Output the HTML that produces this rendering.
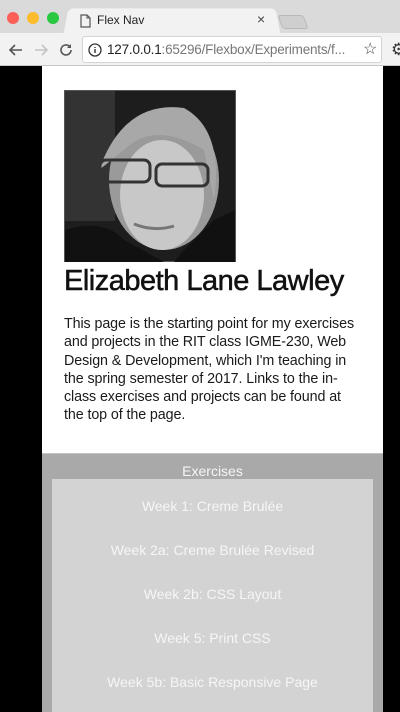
<!DOCTYPE html>
<html><head><meta charset="utf-8"><style>
*{margin:0;padding:0;box-sizing:border-box}
body{width:400px;height:712px;overflow:hidden;background:#000;font-family:"Liberation Sans",sans-serif;position:relative}
.tabbar{position:absolute;left:0;top:0;width:400px;height:34px;background:#dadada}
.dot{position:absolute;top:12px;width:12px;height:12px;border-radius:50%}
.tab{position:absolute;left:66px;top:8px;width:212px;height:26px;background:#f2f2f2;border-radius:5px 5px 0 0;transform:perspective(60px) rotateX(6deg);}
.tab2{position:absolute;left:280px;top:15px;width:26px;height:14px;background:#cfcfcf;border:1px solid #b8b8b8;border-radius:3px;transform:skewX(20deg)}
.toolbar{position:absolute;left:0;top:33px;width:400px;height:33px;background:#f2f2f2;border-bottom:1px solid #c8c8c8}
.url{position:absolute;left:82px;top:3px;width:300px;height:27px;background:#fff;border:1px solid #d4d4d4;border-radius:3px}
.page{position:absolute;left:42px;top:66px;width:341px;height:646px;background:#fff}
.gray{position:absolute;left:42px;top:453px;width:341px;height:259px;background:#a9a9a9;border-top:1px solid #c4c4c4}
.inner{position:absolute;left:52px;top:479px;width:321px;height:233px;background:#d3d3d3}
.lnk{position:absolute;left:0;width:321px;text-align:center;color:#f6f6f6;font-size:14px}
</style></head><body>
<div class="tabbar">
<div class="dot" style="left:7px;background:#fc5f57"></div>
<div class="dot" style="left:27px;background:#fdbc2e"></div>
<div class="dot" style="left:47px;background:#29c840"></div>
<div class="tab"></div>
<svg style="position:absolute;left:80px;top:14px" width="11" height="14"><path d="M1 1h6l3 3v9H1z" fill="none" stroke="#555" stroke-width="1.2"/><path d="M7 1v3h3" fill="none" stroke="#555"/></svg>
<div style="position:absolute;left:97px;top:13px;font-size:12px;color:#222">Flex Nav</div>
<div style="position:absolute;left:257px;top:11px;font-size:14px;color:#444">×</div>
<div class="tab2"></div>
</div>
<div class="toolbar">
<svg style="position:absolute;left:8px;top:9px" width="16" height="16"><path d="M14 8H2M7 3L2 8l5 5" fill="none" stroke="#555" stroke-width="1.6"/></svg>
<svg style="position:absolute;left:33px;top:9px" width="16" height="16"><path d="M2 8h12M9 3l5 5-5 5" fill="none" stroke="#c4c4c4" stroke-width="1.6"/></svg>
<svg style="position:absolute;left:58px;top:9px" width="16" height="16"><path d="M13 8a5 5 0 1 1-1.5-3.6" fill="none" stroke="#555" stroke-width="1.6"/><path d="M13 2v4h-4" fill="#555"/></svg>
<div class="url">
<svg style="position:absolute;left:5px;top:6px" width="14" height="14"><circle cx="7" cy="7" r="6" fill="none" stroke="#333" stroke-width="1.3"/><path d="M7 6v4M7 4v1" stroke="#333" stroke-width="1.4"/></svg>
<div style="position:absolute;left:24px;top:5px;font-size:13.5px;color:#222;white-space:nowrap;letter-spacing:-0.2px">127.0.0.1<span style="color:#777">:65296/Flexbox/Experiments/f...</span></div>
<div style="position:absolute;left:280px;top:2px;font-size:16px;color:#444">☆</div>
</div>
<div style="position:absolute;left:391px;top:7px;font-size:17px;color:#333">⚙</div>
</div>
<div class="page">
<svg style="position:absolute;left:22px;top:24px" width="172" height="172">
<rect x="0.5" y="0.5" width="171" height="171" fill="#1d1d1d" stroke="#555"/>
<rect x="1" y="1" width="50" height="130" fill="#333"/>
<ellipse cx="100" cy="90" rx="55" ry="70" fill="#9a9a9a"/>
<ellipse cx="98" cy="105" rx="42" ry="55" fill="#c8c8c8"/>
<path d="M35 80 Q60 10 120 18 Q160 40 150 110 L140 60 Q90 30 60 60Z" fill="#a8a8a8"/>
<rect x="36" y="70" width="50" height="22" rx="6" fill="none" stroke="#333" stroke-width="3"/>
<rect x="92" y="74" width="52" height="22" rx="6" fill="none" stroke="#333" stroke-width="3"/>
<path d="M1 140 Q40 128 60 150 L100 172 H1Z" fill="#111"/>
<path d="M120 160 L150 130 L171 120 V172 H110Z" fill="#111"/>
<path d="M70 134 Q90 142 110 136" stroke="#777" stroke-width="3" fill="none"/>
</svg>
<div style="position:absolute;left:22px;top:199px;font-size:29px;color:#111;letter-spacing:-0.5px;white-space:nowrap;-webkit-text-stroke:0.5px #111">Elizabeth Lane Lawley</div>
<div style="position:absolute;left:22px;top:249px;font-size:14.3px;line-height:18.3px;color:#1a1a1a;white-space:nowrap;letter-spacing:-0.1px">This page is the starting point for my exercises<br>and projects in the RIT class IGME-230, Web<br>Design &amp; Development, which I'm teaching in<br>the spring semester of 2017. Links to the in-<br>class exercises and projects can be found at<br>the top of the page.</div>
</div>
<div class="gray"><div style="position:absolute;left:0;top:9px;width:341px;text-align:center;color:#f6f6f6;font-size:14px">Exercises</div></div>
<div class="inner">
<div class="lnk" style="top:19px">Week 1: Creme Brulée</div>
<div class="lnk" style="top:63px">Week 2a: Creme Brulée Revised</div>
<div class="lnk" style="top:107px">Week 2b: CSS Layout</div>
<div class="lnk" style="top:151px">Week 5: Print CSS</div>
<div class="lnk" style="top:195px">Week 5b: Basic Responsive Page</div>
</div>
</body></html>
